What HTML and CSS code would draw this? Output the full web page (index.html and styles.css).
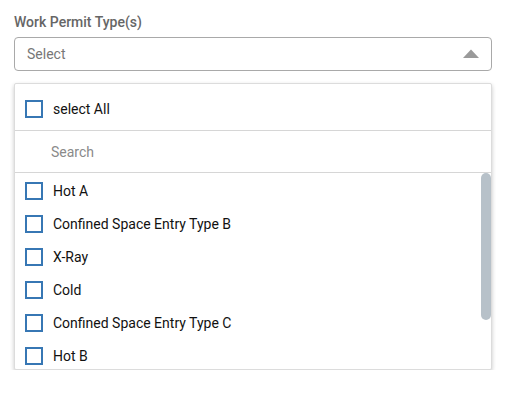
FILE: index.html
```html
<!DOCTYPE html>
<html>
<head>
<meta charset="utf-8">
<link rel="stylesheet" href="styles.css">
</head>
<body>
<div class="field">
  <div class="label">Work Permit Type(s)</div>
  <div class="select">
    <span class="placeholder">Select</span>
    <svg class="arrow" width="16" height="9" viewBox="0 0 16 9"><path d="M0 9 L8 0.5 L16 9 Z" fill="#9a9a9a"/></svg>
  </div>
  <div class="panel">
    <div class="all-row">
      <span class="box"></span><span class="text">select All</span>
    </div>
    <div class="search">Search</div>
    <div class="list">
      <div class="item"><span class="box"></span><span class="text">Hot A</span></div>
      <div class="item"><span class="box"></span><span class="text">Confined Space Entry Type B</span></div>
      <div class="item"><span class="box"></span><span class="text">X-Ray</span></div>
      <div class="item"><span class="box"></span><span class="text">Cold</span></div>
      <div class="item"><span class="box"></span><span class="text">Confined Space Entry Type C</span></div>
      <div class="item"><span class="box"></span><span class="text">Hot B</span></div>
      <div class="thumb"></div>
    </div>
  </div>
</div>
</body>
</html>
```
FILE: styles.css
```css
* { box-sizing: border-box; }
html, body { margin: 0; padding: 0; background: #fff; }
body { font-family: Roboto, "Noto Sans", sans-serif; font-size: 14px; color: #111; }
.field { width: 492px; padding: 12px 0 0 14px; }
.label { font-weight: 500; color: #666; line-height: 20px; height: 20px; margin-bottom: 5px; }
.select {
  height: 34px; border: 1px solid #a9a9a9; border-radius: 4px;
  display: flex; align-items: center; justify-content: space-between;
  padding: 0 12px 0 12px;
}
.placeholder { color: #777; }
.arrow { display: block; margin-top: -2px; }
.panel {
  margin-top: 12px; border: 1px solid #dcdcdc; border-radius: 2px;
  box-shadow: 0 2px 4px rgba(0,0,0,0.22);
  background: #fff;
}
.all-row {
  height: 47px; display: flex; align-items: center; padding: 4px 10px 0;
  border-bottom: 1px solid #d6d6d6;
}
.search {
  height: 42px; border-bottom: 1px solid #d6d6d6; color: #8a8a8a;
  display: flex; align-items: center; padding: 0 0 0 36px;
}
.list { height: 196px; overflow: hidden; position: relative; padding-top: 1px; }
.thumb {
  position: absolute; right: 0; top: 0; width: 10px; height: 147px;
  background: #b7c1c9; border-radius: 5px;
}
.item { height: 33px; display: flex; align-items: center; padding: 0 10px; }
.box { width: 18px; height: 18px; border: 2px solid #3777b4; flex: none; margin-right: 10px; }
.text { color: #111; line-height: 20px; }
```
